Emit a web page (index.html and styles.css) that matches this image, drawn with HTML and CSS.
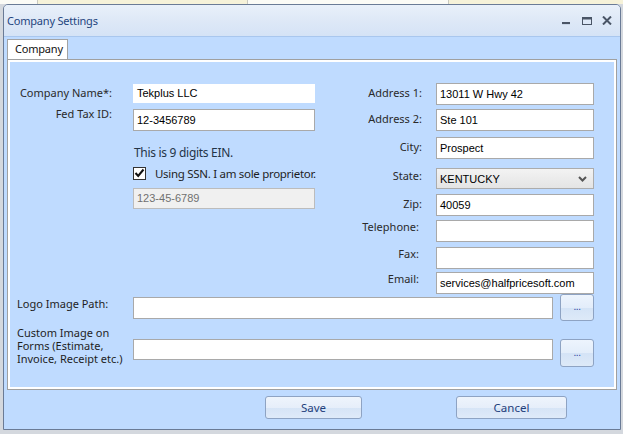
FILE: index.html
```html
<!DOCTYPE html>
<html>
<head>
<meta charset="utf-8">
<link rel="stylesheet" href="styles.css">
</head>
<body>
<div class="strip"><span class="s1"></span><span class="s2"></span><span class="s3"></span><span class="s4"></span></div>
<div class="window">
  <div class="titlebar">
    <span class="title">Company Settings</span>
    <div class="controls">
      <svg class="ctl ctl-min" width="8" height="3" viewBox="0 0 8 3"><rect x="0" y="0" width="8" height="2" fill="#4a5566"/><rect x="0" y="2" width="8" height="1" fill="#c9d6e8"/></svg>
      <svg class="ctl ctl-max" width="10" height="8" viewBox="0 0 10 8"><rect x="0.5" y="0.5" width="9" height="7" fill="none" stroke="#4a5566"/><rect x="0" y="0" width="10" height="2.5" fill="#4a5566"/></svg>
      <svg class="ctl ctl-close" width="10" height="9" viewBox="0 0 10 9"><path d="M1 0.5 L9 8.5 M9 0.5 L1 8.5" stroke="#4a5566" stroke-width="2" fill="none"/></svg>
    </div>
  </div>
  <div class="client">
    <div class="tabs"><div class="tab">Company</div></div>
    <div class="panel">
      <div class="top">
        <div class="left">
          <div class="lrow r1">
            <label class="lbl">Company Name*:</label>
            <div class="inp inp-plain">Tekplus LLC</div>
          </div>
          <div class="lrow r2">
            <label class="lbl">Fed Tax ID:</label>
            <div class="inp">12-3456789</div>
          </div>
          <div class="note">This is 9 digits EIN.</div>
          <div class="check">
            <span class="box"><svg width="11" height="10" viewBox="0 0 11 10"><path d="M1.5 5 L4.2 8 L9.5 1.5" stroke="#111" stroke-width="2" fill="none"/></svg></span>
            <span class="check-text">Using SSN. I am sole proprietor.</span>
          </div>
          <div class="inp inp-disabled ssn">123-45-6789</div>
        </div>
        <div class="right">
          <label class="lbl">Address 1:</label><div class="inp">13011 W Hwy 42</div>
          <label class="lbl">Address 2:</label><div class="inp">Ste 101</div>
          <label class="lbl">City:</label><div class="inp">Prospect</div>
          <label class="lbl lbl-state">State:</label>
          <div class="select"><span>KENTUCKY</span><svg width="9" height="6" viewBox="0 0 9 6"><path d="M1 1 L4.5 4.5 L8 1" stroke="#555" stroke-width="2" fill="none"/></svg></div>
          <label class="lbl">Zip:</label><div class="inp">40059</div>
          <label class="lbl lbl-up">Telephone:</label><div class="inp"></div>
          <label class="lbl lbl-up">Fax:</label><div class="inp"></div>
          <label class="lbl lbl-up">Email:</label><div class="inp">services@halfpricesoft.com</div>
        </div>
      </div>
      <div class="path-row logo">
        <label class="plbl">Logo Image Path:</label>
        <div class="inp pinp"></div>
        <button class="dots">...</button>
      </div>
      <div class="path-row custom">
        <label class="plbl">Custom Image on Forms (Estimate, Invoice, Receipt etc.)</label>
        <div class="inp pinp"></div>
        <button class="dots">...</button>
      </div>
    </div>
    <div class="footer">
      <button class="btn save">Save</button>
      <button class="btn cancel">Cancel</button>
    </div>
  </div>
</div>
</body>
</html>
```
FILE: styles.css
```css
* { box-sizing: border-box; }
html, body {
  margin: 0;
  padding: 0;
}
body {
  width: 623px;
  height: 434px;
  overflow: hidden;
  background: #d4d8de;
  font-family: "Noto Sans", "Open Sans", sans-serif;
  font-size: 11px;
  color: #222;
}
.strip {
  display: flex;
  height: 4px;
}
.strip span { display: block; height: 4px; }
.strip .s1 { width: 38px; background: #fbfbf6; border-right: 1px solid #c9c9c0; }
.strip .s2 { width: 210px; background: #f6f2d9; border-right: 1px solid #c9c9c0; }
.strip .s3 { width: 201px; background: #fbfbf6; border-right: 1px solid #c9c9c0; }
.strip .s4 { flex: 1; background: #f6f2d9; }

.window {
  margin-left: 3px;
  width: 618px;
  height: 426px;
  border: 1px solid #6a7b96;
  border-radius: 5px 5px 0 0;
  background: #bfdbff;
  display: flex;
  flex-direction: column;
  overflow: hidden;
}
.titlebar {
  height: 32px;
  flex: none;
  border-bottom: 1px solid #a9c7ee;
  background: linear-gradient(#e9f0fa 0%, #dfe9f7 45%, #d5e3f6 100%);
  display: flex;
  align-items: center;
  padding: 0 8px 0 3px;
}
.title {
  color: #1f457e;
  font-size: 11px;
  letter-spacing: -0.2px;
  margin-top: -1px;
}
.controls {
  margin-left: auto;
  display: flex;
  align-items: flex-start;
  height: 10px;
}
.ctl { display: block; }
.ctl-min { margin-top: 6px; margin-right: 12px; }
.ctl-max { margin-top: 1px; margin-right: 10px; }
.ctl-close { margin-top: 0; }

.client {
  flex: 1;
  padding: 2px 3px 0 3px;
  display: flex;
  flex-direction: column;
}
.tabs {
  display: flex;
  height: 20px;
}
.tab {
  width: 61px;
  height: 20px;
  background: #fff;
  border: 1px solid #a3a3a3;
  border-bottom: none;
  color: #111;
  padding-left: 7px;
  line-height: 18px;
  font-size: 11px;
  letter-spacing: -0.2px;
}
.panel {
  height: 331px;
  border: 1px solid #a0a0a0;
  box-shadow: inset 0 0 0 2px #fff;
  padding-top: 23px;
}
.top {
  display: flex;
  align-items: flex-start;
}
.left {
  width: 307px;
  margin-top: 1px;
  display: flex;
  flex-direction: column;
}
.lrow {
  display: flex;
  align-items: flex-start;
}
.lbl {
  color: #2a2a2a;
  text-align: right;
  line-height: 16px;
  white-space: nowrap;
}
.lrow .lbl {
  width: 104px;
  margin-right: 21px;
}
.r1 .lbl { margin-top: 1px; }
.r2 { margin-top: 6px; }
.r2 .lbl { margin-top: -3px; }

.inp {
  background: #fff;
  border: 1px solid #a9a9a9;
  height: 22px;
  padding: 0 0 0 3px;
  line-height: 20px;
  font-family: "Liberation Sans", Arial, sans-serif;
  font-size: 11px;
  color: #000;
  white-space: nowrap;
  overflow: hidden;
}
.lrow .inp { width: 182px; }
.inp-plain {
  height: 19px;
  border-color: #fff;
  line-height: 17px;
}
.note {
  margin-left: 126px;
  margin-top: 13px;
  font-size: 12px;
  letter-spacing: -0.3px;
  line-height: 18px;
  color: #243447;
  white-space: nowrap;
}
.check {
  margin-left: 125px;
  margin-top: 3px;
  display: flex;
  align-items: center;
  height: 16px;
  white-space: nowrap;
}
.box {
  flex: none;
  width: 13px;
  height: 13px;
  border: 1px solid #333;
  background: #fff;
  display: flex;
  align-items: center;
  justify-content: center;
}
.box svg { display: block; }
.check-text {
  margin-left: 9px;
  font-size: 11.5px;
  letter-spacing: -0.3px;
  color: #1e1e1e;
}
.ssn {
  margin-left: 125px;
  margin-top: 7px;
  width: 182px;
  height: 21px;
}
.inp-disabled {
  background: #f0f0f0;
  border-color: #bcbcbc;
  color: #707070;
  line-height: 19px;
}

.right {
  display: grid;
  grid-template-columns: 107px 158px;
  column-gap: 14px;
  grid-template-rows: 26px 28px 31px 26px 26px 27px 25px 22px;
  align-items: start;
}
.right .lbl {
  align-self: start;
  margin-top: 2px;
}
.right .lbl-state { margin-top: 0; }
.right .lbl-up {
  margin-top: -1px;
  padding-right: 3px;
}
.select {
  height: 21px;
  border: 1px solid #acacac;
  background: linear-gradient(#f3f3f3, #e4e4e4);
  display: flex;
  align-items: center;
  padding: 0 6px 0 3px;
  font-family: "Liberation Sans", Arial, sans-serif;
  font-size: 11px;
  color: #000;
}
.select svg { margin-left: auto; display: block; }

.path-row {
  display: flex;
  align-items: flex-start;
  padding-left: 9px;
}
.plbl {
  width: 116px;
  color: #1e1e1e;
  line-height: 13px;
  font-size: 11px;
}
.pinp {
  width: 420px;
  margin-right: 7px;
}
.dots {
  width: 34px;
  border: 1px solid #8ea3c3;
  border-radius: 3px;
  background: linear-gradient(#edf4fd 0%, #e3edfa 50%, #d4e3f6 52%, #dde9f8 100%);
  color: #2a40a0;
  font-family: "Liberation Sans", Arial, sans-serif;
  font-size: 10px;
  padding: 0;
  padding-bottom: 2px;
  letter-spacing: -0.5px;
}
.logo .plbl { margin-top: 3px; }
.logo .pinp { margin-top: 3px; }
.logo .dots { height: 27px; }
.custom { margin-top: 5px; }
.custom .pinp { margin-top: 13px; height: 21px; }
.custom .dots { margin-top: 13px; height: 28px; }

.footer {
  display: flex;
  padding-left: 258px;
  padding-top: 6px;
}
.btn {
  height: 23px;
  border: 1px solid #8ea3c3;
  border-radius: 3px;
  background: linear-gradient(#eef4fc 0%, #e6eefa 50%, #d6e4f6 52%, #dfeaf9 100%);
  color: #1f3f7c;
  font-family: "Noto Sans", "Open Sans", sans-serif;
  font-size: 11.5px;
  padding: 0;
}
.save { width: 97px; }
.cancel { width: 111px; margin-left: 94px; }
```
